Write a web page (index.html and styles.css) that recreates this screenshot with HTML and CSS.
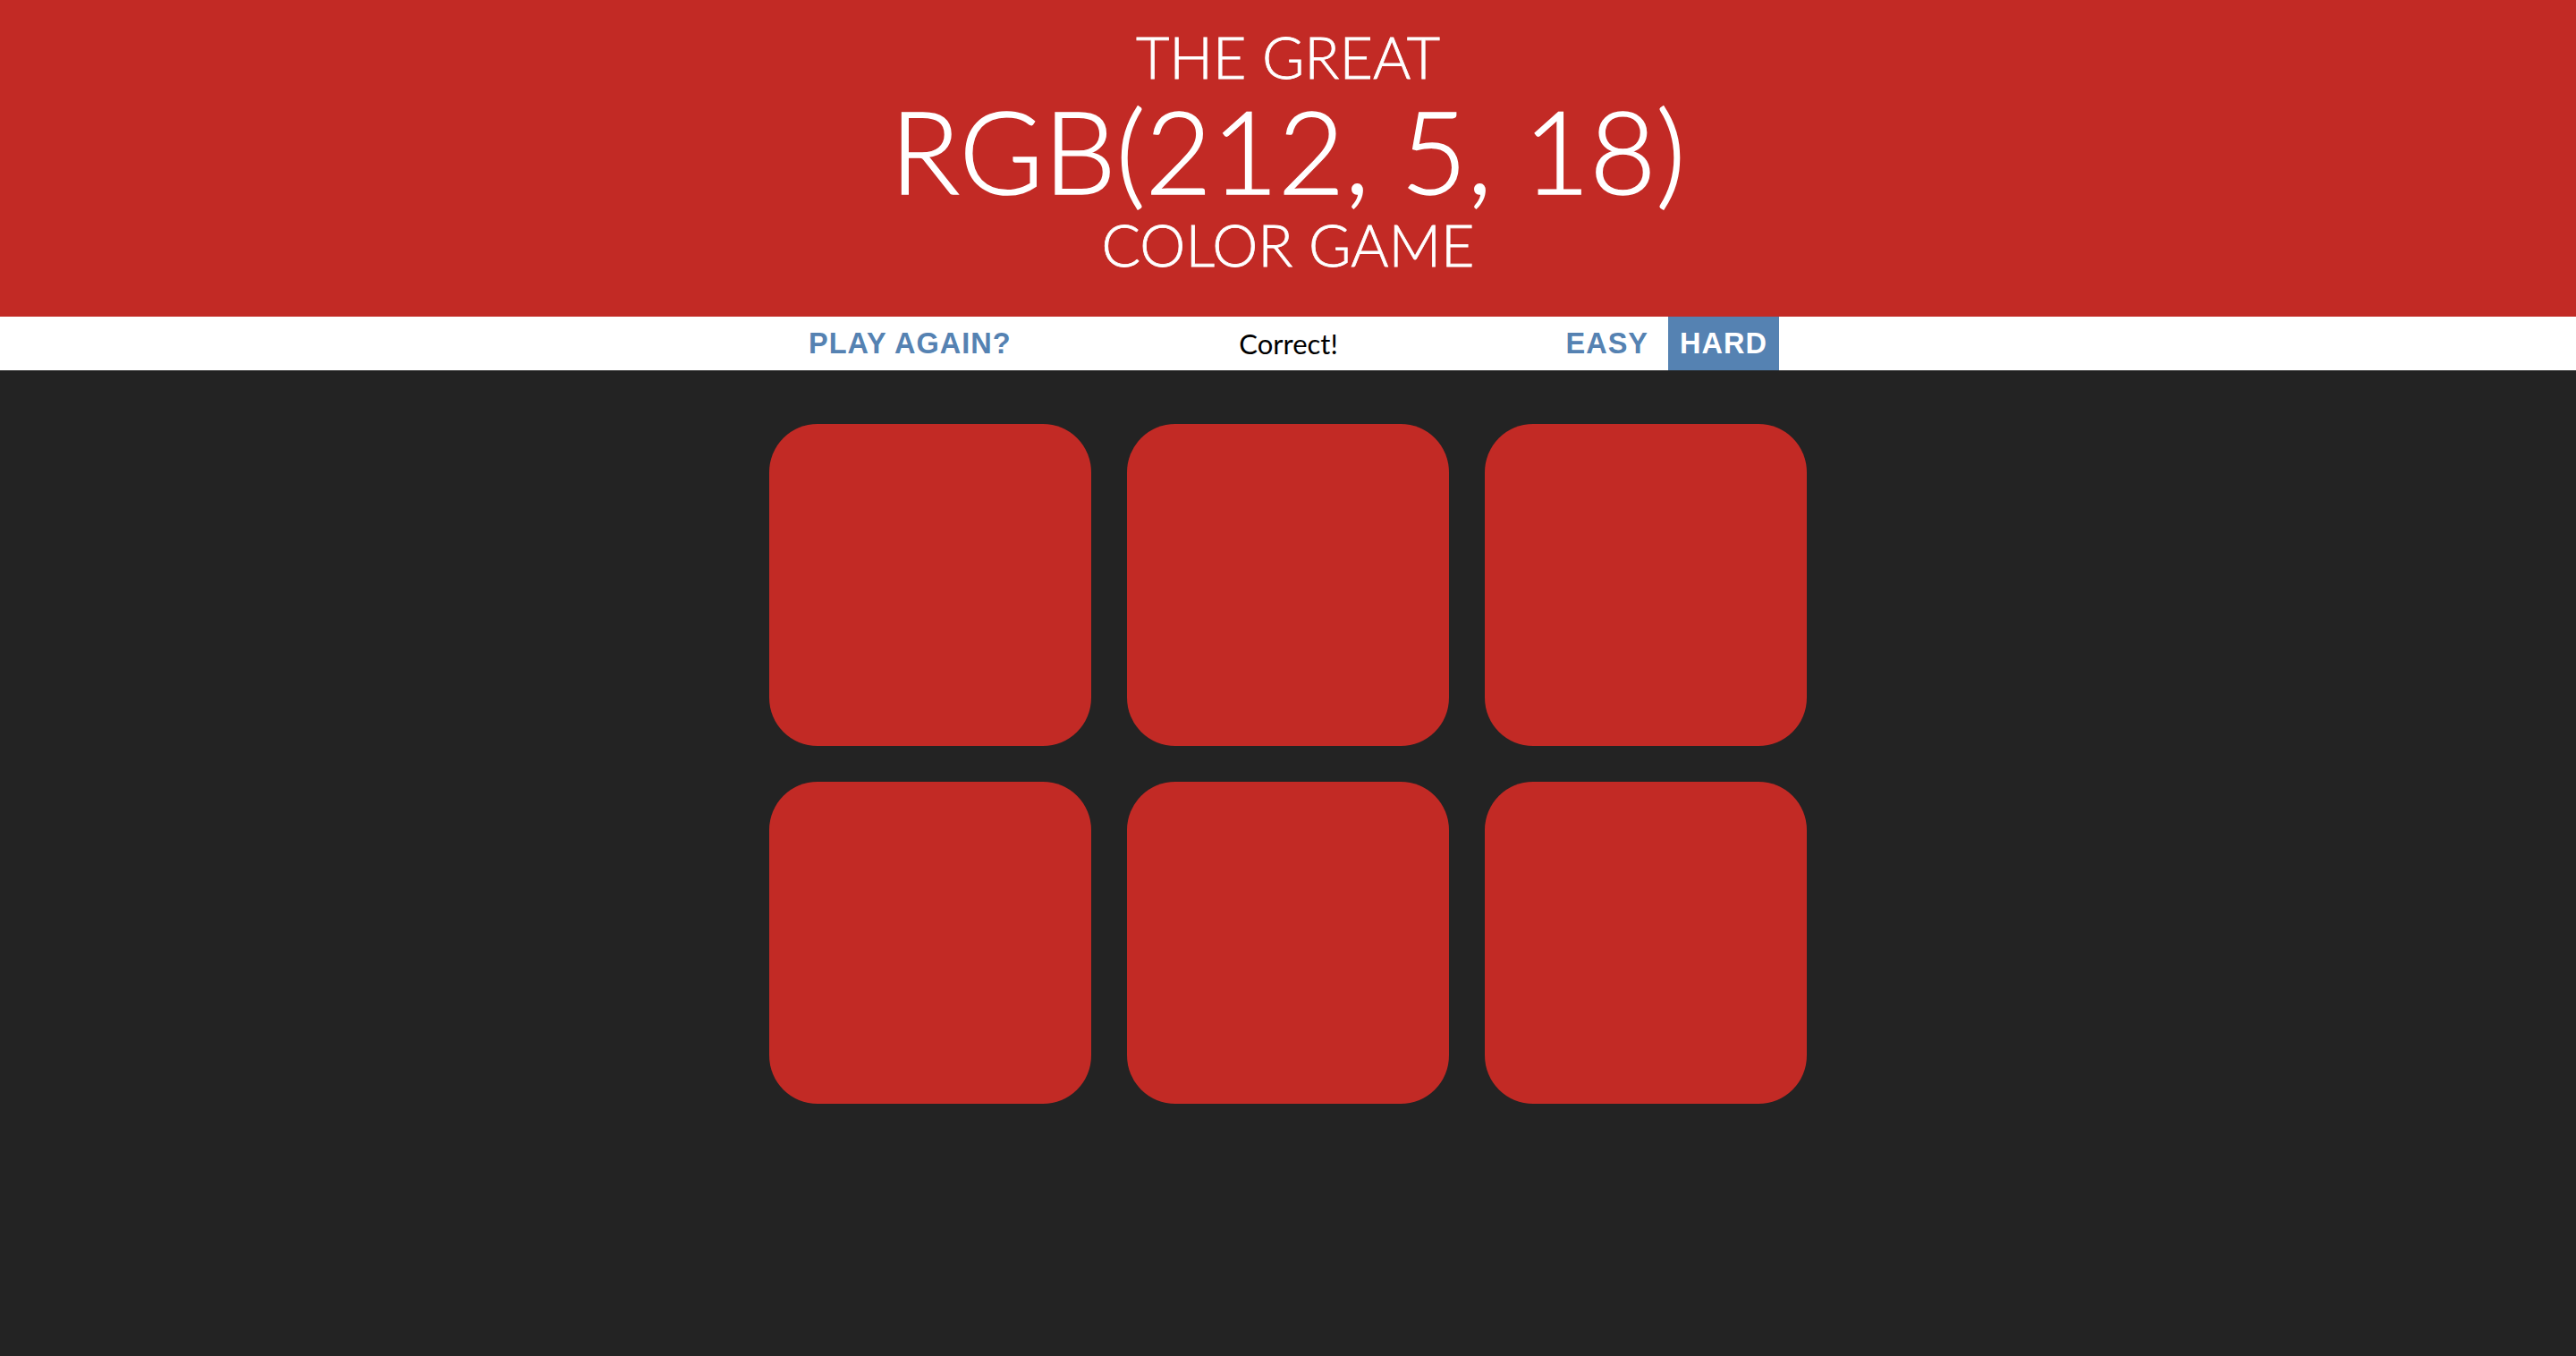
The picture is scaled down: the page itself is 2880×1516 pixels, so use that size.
FILE: index.html
```html
<!DOCTYPE html>
<html>
<head>
<meta charset="utf-8">
<title>Color Game</title>
<link rel="stylesheet" href="styles.css">
</head>
<body>
<h1 class="title">
  <span class="title-line">The Great</span>
  <span class="title-line big" id="colorDisplay">RGB(212, 5, 18)</span>
  <span class="title-line">Color Game</span>
</h1>
<div class="stripe">
  <button class="btn btn-reset">Play Again?</button>
  <span class="message">Correct!</span>
  <div class="modes">
    <button class="btn">Easy</button>
    <button class="btn selected">Hard</button>
  </div>
</div>
<div class="container">
  <div class="square"></div>
  <div class="square"></div>
  <div class="square"></div>
  <div class="square"></div>
  <div class="square"></div>
  <div class="square"></div>
</div>
</body>
</html>
```
FILE: styles.css
```css
html, body {
  margin: 0;
  padding: 0;
}
body {
  background: #232323;
  font-family: Lato, "Open Sans", sans-serif;
  min-height: 100vh;
}
.title {
  margin: 0;
  background: #c22a25;
  color: #ffffff;
  font-weight: 300;
  text-transform: uppercase;
  text-align: center;
  display: flex;
  flex-direction: column;
  align-items: center;
  height: 354px;
  box-sizing: border-box;
  padding-top: 28px;
}
.title-line {
  display: block;
  font-size: 64.5px;
  line-height: 70px;
  -webkit-text-stroke: 0.8px #ffffff;
}
.title-line.big {
  font-size: 128px;
  line-height: 140px;
  -webkit-text-stroke: 1.5px #ffffff;
}
.stripe {
  background: #ffffff;
  height: 60px;
  display: flex;
  justify-content: center;
  align-items: stretch;
  gap: 9px;
}
.btn {
  border: none;
  background: none;
  margin: 0;
  padding: 0 13px;
  height: 100%;
  font-family: "Liberation Sans", Arial, sans-serif;
  font-weight: 700;
  font-size: 32.5px;
  letter-spacing: 1px;
  text-transform: uppercase;
  color: #5582b2;
  cursor: pointer;
}
.btn.selected {
  background: #5582b2;
  color: #ffffff;
}
.modes {
  display: flex;
  gap: 9px;
}
.message {
  width: 576px;
  display: flex;
  align-items: center;
  justify-content: center;
  font-size: 31px;
  color: #000000;
}
.container {
  width: 1200px;
  margin: 0 auto;
  padding-top: 60px;
  display: grid;
  grid-template-columns: repeat(3, 360px);
  grid-auto-rows: 360px;
  gap: 40px;
  justify-content: center;
}
.square {
  background: #c22a25;
  border-radius: 54px;
}
```
